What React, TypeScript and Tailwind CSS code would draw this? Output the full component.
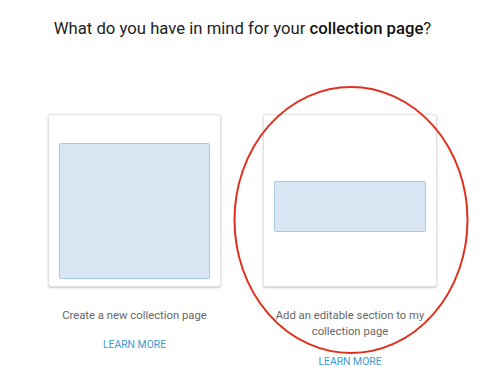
export default function App() {
  return (
    <div className="relative w-[500px] h-[390px] bg-white overflow-hidden" style={{ fontFamily: "Roboto, 'Liberation Sans', sans-serif" }}>
      <div className="pt-[17px] pr-[15px] text-center text-[16.7px] leading-[24px] text-[#222]">
        What do you have in mind for your <span className="font-medium text-[#111]">collection page</span>?
      </div>
      <div className="mt-[73px] ml-[48px] flex gap-[42px]">
        <div className="w-[173px] flex flex-col items-center">
          <div className="w-[173px] h-[173px] rounded-[3px] border border-[#e2e2e2] bg-white shadow-[0_1px_2px_rgba(0,0,0,0.22)] pt-[28px] px-[10px]">
            <div className="h-[136px] rounded-[2px] border border-[#a9c9e9] bg-[#dae6f3]" />
          </div>
          <div className="mt-[21px] text-[11.3px] leading-[16px] text-[#666] text-center">Create a new collection page</div>
          <div className="mt-[13px] text-[10.4px] leading-[16px] text-[#3d9bd0]">LEARN MORE</div>
        </div>
        <div className="w-[174px] flex flex-col items-center">
          <div className="w-[174px] h-[173px] rounded-[3px] border border-[#e2e2e2] bg-white shadow-[0_1px_2px_rgba(0,0,0,0.22)] pt-[66px] px-[10px]">
            <div className="w-full h-[51px] rounded-[2px] border border-[#a9c9e9] bg-[#dae6f3]" />
          </div>
          <div className="mt-[21px] w-[170px] text-[11.3px] leading-[16px] text-[#666] text-center">Add an editable section to my collection page</div>
          <div className="mt-[14px] text-[10.4px] leading-[16px] text-[#3d9bd0]">LEARN MORE</div>
        </div>
      </div>
      <svg className="absolute left-0 top-0 pointer-events-none" width="500" height="390">
        <ellipse cx="351" cy="220" rx="116.5" ry="133" fill="none" stroke="#e0301e" strokeWidth="2" />
      </svg>
    </div>
  );
}
